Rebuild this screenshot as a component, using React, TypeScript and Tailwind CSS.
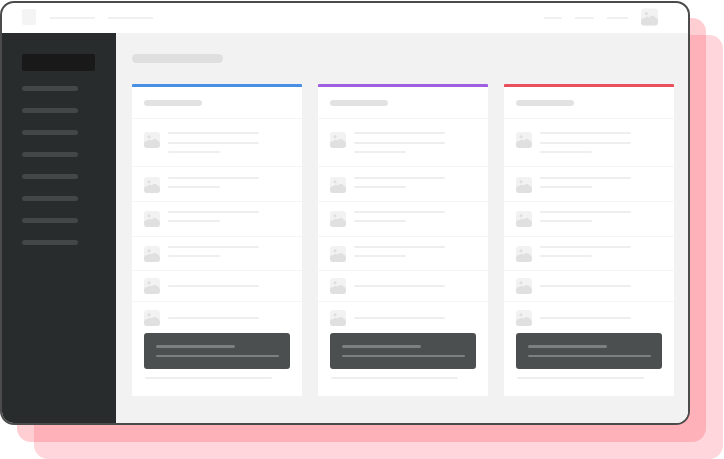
import React from "react";

function Img({ className }: { className: string }) {
  return (
    <svg viewBox="0 0 16 16" className={className}>
      <rect x="0" y="0" width="16" height="16" rx="3" fill="#f2f2f2" />
      <circle cx="5" cy="4.8" r="1.5" fill="#dedede" />
      <path d="M0 12 C0 9.5 2 8.6 3.6 9 C4.6 7.4 6.6 7.2 7.8 8.6 C9 6.4 12.6 6.2 13.6 8.8 C15 9 16 10.2 16 12 V13 A3 3 0 0 1 13 16 H3 A3 3 0 0 1 0 13 Z" fill="#e0e0e0" />
    </svg>
  );
}

function Line({ className }: { className: string }) {
  return <div className={`h-[2px] rounded-full bg-[#eeeeee] blur-[0.5px] ${className}`} />;
}

function Row({ h, pt, lines, gap, border = true }: { h: string; pt: string; lines: string[]; gap: string; border?: boolean }) {
  return (
    <div className={`flex shrink-0 px-3 ${h} ${pt} ${border ? "border-b border-[#f5f5f5]" : ""}`}>
      <Img className="w-4 h-4 shrink-0 blur-[0.5px]" />
      <div className={`ml-2 flex flex-col ${gap}`}>
        {lines.map((l, i) => (
          <Line key={i} className={l} />
        ))}
      </div>
    </div>
  );
}

function Column({ color }: { color: string }) {
  return (
    <div className="w-[170px] h-[312px] shrink-0 bg-white flex flex-col">
      <div className={`h-[3px] rounded-t-[1px] blur-[0.3px] ${color}`} />
      <div className="h-[32px] shrink-0 px-3 pt-[13px] border-b border-[#f5f5f5]">
        <div className="w-[58px] h-[6px] rounded-full bg-[#e2e2e2] blur-[0.5px]" />
      </div>
      <div className="h-[48px] shrink-0 flex px-3 pt-[13px] border-b border-[#f5f5f5]">
        <Img className="w-4 h-4 shrink-0 blur-[0.5px]" />
        <div className="ml-2 flex flex-col">
          <Line className="w-[91px]" />
          <Line className="w-[91px] mt-[8px]" />
          <Line className="w-[52px] mt-[7px]" />
        </div>
      </div>
      <Row h="h-[35px]" pt="pt-[10px]" gap="gap-[7px]" lines={["w-[91px]", "w-[52px]"]} />
      <Row h="h-[35px]" pt="pt-[9px]" gap="gap-[7px]" lines={["w-[91px]", "w-[52px]"]} />
      <Row h="h-[34px]" pt="pt-[9px]" gap="gap-[7px]" lines={["w-[91px]", "w-[52px]"]} />
      <div className="h-[31px] shrink-0 flex items-center px-3 border-b border-[#f5f5f5]">
        <Img className="w-4 h-4 shrink-0 blur-[0.5px]" />
        <Line className="w-[91px] ml-2" />
      </div>
      <div className="h-[31px] shrink-0 flex items-center px-3">
        <Img className="w-4 h-4 shrink-0 blur-[0.5px]" />
        <Line className="w-[91px] ml-2" />
      </div>
      <div className="mx-3 h-[36px] shrink-0 rounded-[3px] bg-[#4c4f4f] px-3 pt-[12px]">
        <div className="w-[79px] h-[2.5px] rounded-full bg-[#7c8080] blur-[0.3px]" />
        <div className="w-[123px] h-[2.5px] mt-[7px] rounded-full bg-[#7c8080] blur-[0.3px]" />
      </div>
      <Line className="w-[127px] mx-[13px] mt-[8px]" />
    </div>
  );
}

export default function App() {
  return (
    <div className="w-[724px] h-[459px] bg-white overflow-hidden grid">
      <div className="col-start-1 row-start-1 ml-[34px] mt-[35px] w-[689px] h-[424px] rounded-[14px] bg-[#ff5d6e] opacity-25" />
      <div className="col-start-1 row-start-1 ml-[17px] mt-[18px] w-[689px] h-[424px] rounded-[14px] bg-[#ff5d6e] opacity-30" />
      <div className="col-start-1 row-start-1 z-10 mt-[1px] w-[690px] h-[424px] rounded-[14px] border-2 border-[#4b4b4b] bg-white overflow-hidden flex flex-col">
        <div className="h-[30px] shrink-0 flex items-center pl-[20px] pr-[30px]">
          <div className="w-[14px] h-[16px] rounded-[2px] bg-[#f4f4f4] -mt-[3px] blur-[0.5px]" />
          <div className="ml-[14px] w-[45px] h-[2px] bg-[#f0f0f0] -mt-[1px] blur-[0.5px]" />
          <div className="ml-[13px] w-[45px] h-[2px] bg-[#f0f0f0] -mt-[1px] blur-[0.5px]" />
          <div className="ml-auto w-[18px] h-[2px] bg-[#f0f0f0] -mt-[1px] blur-[0.5px]" />
          <div className="ml-[13px] w-[19px] h-[2px] bg-[#f0f0f0] -mt-[1px] blur-[0.5px]" />
          <div className="ml-[13px] w-[21px] h-[2px] bg-[#f0f0f0] -mt-[1px] blur-[0.5px]" />
          <Img className="ml-[13px] w-[17px] h-[18px] -mt-[3px] blur-[0.5px]" />
        </div>
        <div className="flex-1 flex min-h-0">
          <div className="w-[114px] shrink-0 bg-[#292c2c] pl-[20px] pt-[21px] flex flex-col">
            <div className="w-[73px] h-[17px] rounded-[2px] bg-[#191919] blur-[0.3px]" />
            <div className="mt-[15px] flex flex-col gap-[17px]">
              {[0, 1, 2, 3, 4, 5, 6, 7].map((i) => (
                <div key={i} className="w-[56px] h-[5px] rounded-full bg-[#444747] blur-[0.5px]" />
              ))}
            </div>
          </div>
          <div className="flex-1 bg-[#f2f2f2] pl-[16px] pt-[21px]">
            <div className="w-[91px] h-[9px] rounded-full bg-[#dfdfdf] blur-[0.5px]" />
            <div className="mt-[21px] flex gap-[16px]">
              <Column color="bg-[#4a90e2]" />
              <Column color="bg-[#a05fe0]" />
              <Column color="bg-[#e8505f]" />
            </div>
          </div>
        </div>
      </div>
    </div>
  );
}
